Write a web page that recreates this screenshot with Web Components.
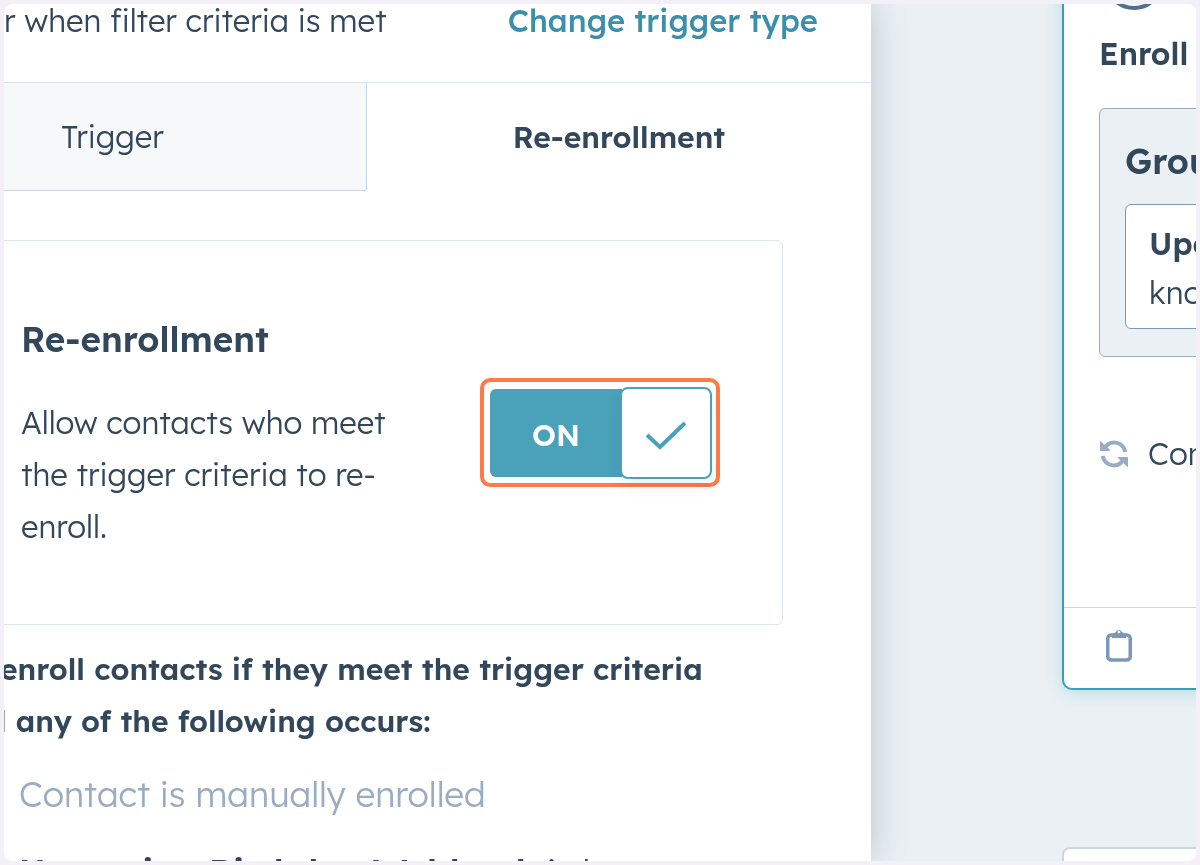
<!DOCTYPE html>
<html lang="en">
<head>
<meta charset="utf-8">
<title>Workflow re-enrollment</title>
<style>
html, body { margin: 0; height: 100%; }
body { background: #f3f1f7; color: #33475b; font-family: "Lexend Deca", Lexend, Inter, "Liberation Sans", sans-serif; font-size: 31px; font-weight: 300; line-height: 52px; }
</style>
</head>
<body>
<workflow-editor></workflow-editor>
<script>
function define(name, css, html) {
  const template = document.createElement('template');
  template.innerHTML = '<style>*{box-sizing:border-box}:host{display:block;box-sizing:border-box}' + css + '</style>' + html;
  customElements.define(name, class extends HTMLElement {
    constructor() {
      super();
      this.attachShadow({ mode: 'open' }).append(template.content.cloneNode(true));
    }
  });
}

define('panel-header', `
:host { display: flex; justify-content: space-between; align-items: flex-start; height: 79px; padding: 0 53px 0 0; border-bottom: 1px solid #dfe3eb; line-height: 34px; white-space: nowrap; }
a { color: #3b8fab; font-weight: 550; text-decoration: none; }
`, `<span><slot></slot></span><a href="#type">Change trigger type</a>`);

define('panel-tabs', `
:host { display: grid; grid-template-columns: 363px 1fr; height: 108px; }
button { font: inherit; color: inherit; border: 0; background: #fff; padding: 0; }
.idle { background: #f7f8fa; border: solid #cbd6e2; border-width: 0 1px 1px 0; padding-right: 145px; }
.active { font-size: 30px; font-weight: 600; }
`, `<button class="idle" type="button">Trigger</button><button class="active" type="button">Re-enrollment</button>`);

define('toggle-switch', `
:host { border: 4px solid #ff7a47; border-radius: 10px; padding: 4px 4px 3px 6px; }
button { display: flex; align-items: center; width: 222px; height: 94px; padding: 0; border: 0; background: none; font: inherit; font-size: 30px; font-weight: 600; color: #fff; }
.on { flex: 1; height: 88px; line-height: 92px; border-radius: 6px 0 0 6px; background: #4aa1ba; }
.knob { display: grid; place-items: center; width: 92px; height: 92px; padding-top: 6px; margin-left: -2px; border: 2px solid #4aa1ba; border-radius: 8px; background: #fff; box-shadow: 0 8px 16px rgba(0,0,0,.06); }
`, `<button type="button" role="switch" aria-checked="true" aria-label="Re-enrollment"><span class="on">ON</span><span class="knob"><svg width="42" height="30" viewBox="0 0 42 30" fill="none" stroke="#4aa1ba" stroke-width="4"><path d="M2 14 15 26 40 2"/></svg></span></button>`);

define('reenroll-card', `
:host { display: flex; align-items: center; justify-content: space-between; margin: 49px 88px 0 -8px; height: 385px; padding: 0 62px 0 24px; border: 1px solid #dfe3eb; border-radius: 6px; }
h2 { margin: 0 0 32px; font-size: 35px; line-height: 52px; font-weight: 600; }
p { margin: 0; width: 400px; }
`, `<div><h2>Re-enrollment</h2><p>Allow contacts who meet<br>the trigger criteria to re-<br>enroll.</p></div><toggle-switch></toggle-switch>`);

define('reenroll-rules', `
:host { padding-top: 18px; white-space: nowrap; }
h3 { margin: 0 0 0 -4px; font-size: 30px; font-weight: 600; }
h3 span { display: block; }
.hang { text-indent: -13px; }
p { margin: 21px 0 0 15px; font-size: 35px; }
.strong { margin-top: 26px; }
.muted { color: #99acc2; }
b { font-weight: 600; }
`, `<h3><span>enroll contacts if they meet the trigger criteria</span><span class="hang">d any of the following occurs:</span></h3>
<p class="muted">Contact is manually enrolled</p><p class="strong"><b>Upcoming Birthday Webhook</b> is known</p>`);

define('enroll-card', `
:host { margin: -20px -20px 0 0; height: 706px; border: 2px solid #3b9db8; border-radius: 10px; background: #fff; box-shadow: 0 2px 16px rgba(0,164,189,.24); display: flex; flex-direction: column; white-space: nowrap; overflow: hidden; }
.badge { width: 60px; height: 60px; margin: -36px 0 0 40px; border: 4px solid #516f90; border-radius: 50%; flex: none; }
h2 { font-size: 31px; line-height: 52px; font-weight: 600; margin: 18px 0 28px 35px; }
.group { flex: none; margin: 0 0 0 35px; height: 249px; padding: 26px 0 0 25px; background: #eaf0f4; border: 1px solid #99acc2; border-radius: 6px; }
h3 { margin: 0 0 17px; font-size: 35px; line-height: 52px; font-weight: 600; }
.rule { height: 125px; padding: 14px 0 0 23px; background: #fff; border: 1px solid #7c98b6; border-radius: 6px; line-height: 49px; }
.rule b { display: block; font-weight: 600; }
.again { display: flex; align-items: center; gap: 20px; margin: 71px 0 0 36px; }
svg { flex: none; }
footer { margin-top: auto; height: 81px; padding: 20px 0 0 42px; border-top: 1px solid #cbd6e2; line-height: 0; }
`, `<div class="badge"></div><h2>Enroll</h2>
<div class="group"><h3>Group 1</h3><div class="rule"><b>Upcoming</b>known</div></div>
<div class="again"><svg width="28" height="28" viewBox="0 0 28 28" fill="none" stroke="#99acc2" stroke-width="4"><path d="M4 9C9 0 22 0 25.500 12M24 19C19 28 6 28 2.500 16"/><path d="M0 1.500Q0 .5 1 1.500L10 10Q10.500 11 9.500 11H0ZM28 26.500Q28 27.500 27 26.500L18 18Q17.500 17 18.500 17H28Z" fill="#99acc2" stroke="none"/></svg><span>Contacts</span></div>
<footer><svg width="26" height="34" viewBox="0 0 26 34" fill="none" stroke="#7c98b6" stroke-width="3.500"><rect x="1.750" y="7" width="22.500" height="25" rx="3.500"/><path d="M6 10V6L10 4A3.200 3.200 0 0 1 16 4L20 6V10Z" fill="#7c98b6" stroke="none"/><circle cx="13" cy="4" r="1.300" fill="#fff" stroke="none"/></svg></footer>`);

define('workflow-editor', `
:host { display: flex; position: fixed; inset: 4px; border-radius: 8px; overflow: hidden; background: #eaf0f4; }
main { flex: 0 0 867px; background: #fff; box-shadow: 0 0 32px rgba(45,62,100,.26); z-index: 1; }
aside { flex: 1; min-width: 0; padding-left: 191px; }
.next { margin: 157px -20px 0 0; height: 200px; background: #fff; border: 2px solid #cbd6e2; border-radius: 8px; }
`, `<main><panel-header>r when filter criteria is met</panel-header><panel-tabs></panel-tabs><reenroll-card></reenroll-card><reenroll-rules></reenroll-rules></main>
<aside><enroll-card></enroll-card><div class="next"></div></aside>`);
</script>
</body>
</html>
